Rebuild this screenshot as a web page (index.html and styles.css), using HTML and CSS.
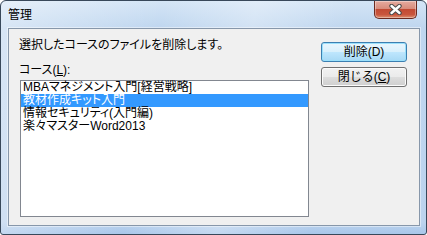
FILE: index.html
```html
<!DOCTYPE html>
<html lang="ja">

<head>
    <meta charset="UTF-8">
    <title>管理</title>
    <link rel="stylesheet" href="styles.css">
</head>

<body>
    <div class="window">
        <div class="titlebar">
            <span class="title">管理</span>
            <button class="close" title="閉じる">
                <svg width="13" height="11" viewBox="0 0 13 11">
                    <path d="M2.5 2 L10.5 9 M10.5 2 L2.5 9" stroke="#4a4a4a" stroke-width="4.4" stroke-linecap="round" />
                    <path d="M2.5 2 L10.5 9 M10.5 2 L2.5 9" stroke="#ffffff" stroke-width="2.4" stroke-linecap="round" />
                </svg>
            </button>
        </div>

        <div class="frame">
            <div class="client">
                <div class="main">
                    <p class="message">選択したコースのファイルを削除します。</p>
                    <div class="label">コース(<u>L</u>):</div>
                    <ul class="list">
                        <li>MBAマネジメント入門[経営戦略]</li>
                        <li class="selected">教材作成キット入門</li>
                        <li>情報セキュリティ(入門編)</li>
                        <li>楽々マスターWord2013</li>
                    </ul>
                </div>

                <div class="actions">
                    <button class="btn default">削除(D)</button>
                    <button class="btn">閉じる(<u>C</u>)</button>
                </div>
            </div>
        </div>
    </div>
</body>

</html>
```

FILE: styles.css
```css
html,
body {
    margin: 0;
    padding: 0;
}

body {
    width: 427px;
    height: 235px;
    overflow: hidden;
    background: #ffffff;
    /* 英数字は Arial 幅、かなは詰め組み */
    font-family: "Liberation Sans", "Noto Sans CJK JP", sans-serif;
    font-size: 12px;
    font-feature-settings: "palt";
    color: #000000;
}

/* ウィンドウ枠 (Aero風) */
.window {
    box-sizing: border-box;
    width: 427px;
    height: 235px;
    border: 1px solid #38485a;
    border-radius: 6px 6px 3px 3px;
    display: flex;
    flex-direction: column;
    background:
        linear-gradient(100deg, rgba(255, 255, 255, 0.4) 0%, rgba(255, 255, 255, 0) 35%, rgba(255, 255, 255, 0.3) 55%, rgba(255, 255, 255, 0) 75%),
        linear-gradient(#d4e5f6 0%, #bfd6ef 27px, #bcd3ee 95%, #a9c7ea 100%);
}

.titlebar {
    height: 27px;
    display: flex;
    justify-content: space-between;
    align-items: flex-start;
    padding: 0 9px 0 7px;
}

.title {
    padding-top: 7px;
    line-height: 14px;
    font-feature-settings: normal;
}

.close {
    width: 43px;
    height: 18px;
    padding: 0;
    border: 1px solid #6b2a20;
    border-top: none;
    border-radius: 0 0 5px 5px;
    display: flex;
    align-items: center;
    justify-content: center;
    background: linear-gradient(#e6ab9f 0%, #d88c7c 45%, #c24a33 50%, #c9563d 80%, #dc9070 100%);
    box-shadow: inset 0 0 0 1px rgba(255, 255, 255, 0.35);
}

.frame {
    flex: 1;
    display: flex;
    padding: 0 6px 8px 7px;
}

.client {
    flex: 1;
    border: 1px solid #8797aa;
    box-shadow: 0 0 0 1px rgba(255, 255, 255, 0.45);
    background: #f0f0f0;
    display: grid;
    grid-template-columns: 300px 86px;
    column-gap: 12px;
    padding-right: 12px;
}

.main {
    padding: 9px 0 0 10px;
}

.message {
    margin: 0;
    line-height: 14px;
    white-space: nowrap;
}

.label {
    margin-top: 11px;
    line-height: 14px;
}

.list {
    box-sizing: border-box;
    width: 289px;
    height: 137px;
    margin: 3px 0 0 1px;
    padding: 0;
    list-style: none;
    border: 1px solid #828790;
    background: #ffffff;
}

.list li {
    height: 13px;
    line-height: 13px;
    padding-left: 2px;
    white-space: nowrap;
}

.list li.selected {
    background: #3399ff;
    color: #ffffff;
}

/* ボタン */
.actions {
    padding-top: 13px;
    display: flex;
    flex-direction: column;
    gap: 5px;
}

.btn {
    box-sizing: border-box;
    width: 86px;
    height: 20px;
    padding: 0;
    border: 1px solid #707070;
    border-radius: 3px;
    font-family: inherit;
    font-size: 12px;
    line-height: 14px;
    color: #000000;
    background: linear-gradient(#f2f2f2 0%, #ebebeb 48%, #dddddd 52%, #cfcfcf 100%);
    box-shadow: inset 0 0 0 1px #fbfbfb;
}

.btn.default {
    border-color: #3c7fb1;
    background: linear-gradient(#eaf6fd 0%, #d9f0fc 48%, #bee6fd 52%, #a7d9f5 100%);
    box-shadow: inset 0 0 0 1px #9be0fb;
}
```
